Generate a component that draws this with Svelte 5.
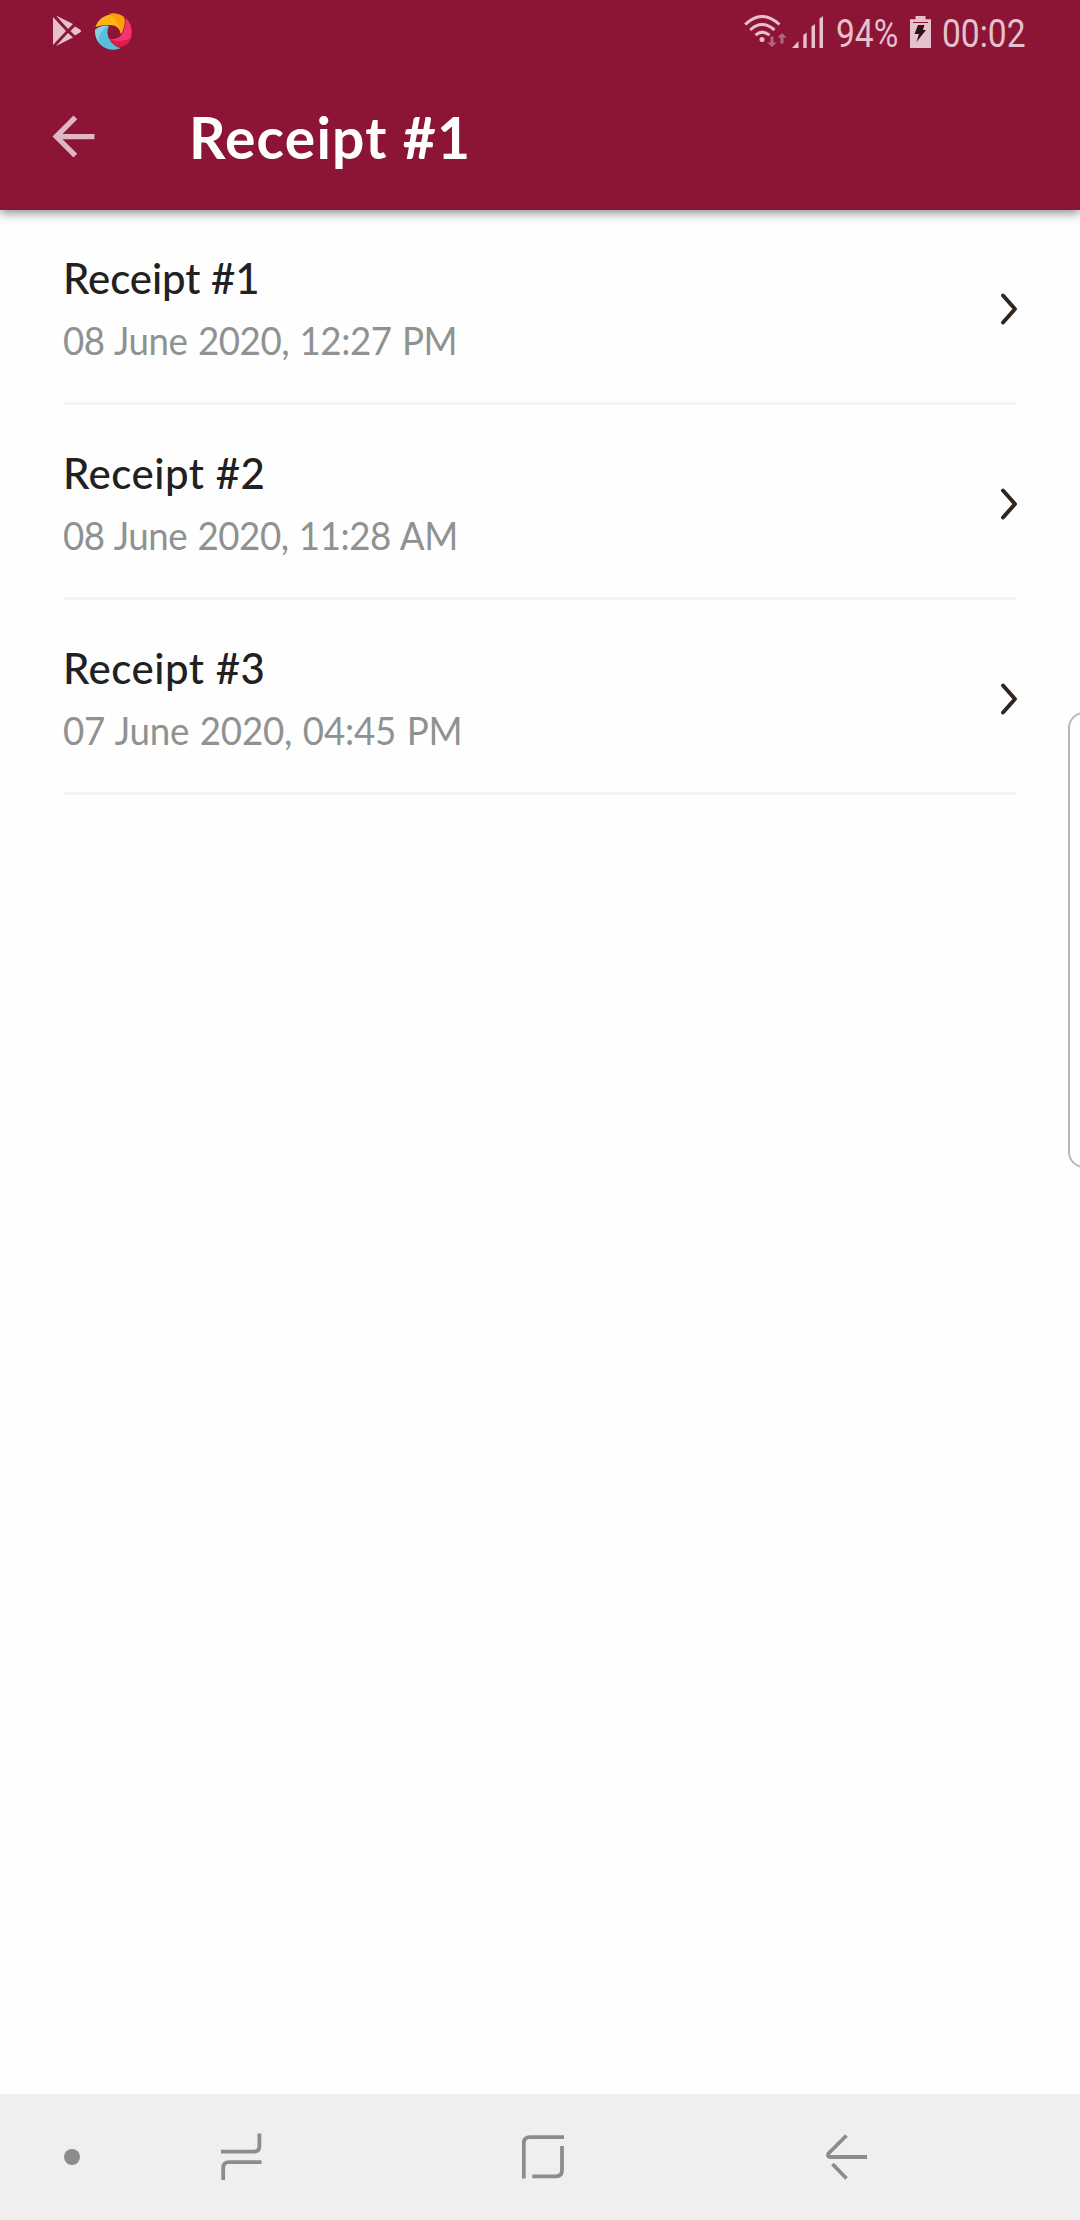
<script>
  const receipts = [
    { name: 'Receipt #1', date: '08 June 2020, 12:27 PM' },
    { name: 'Receipt #2', date: '08 June 2020, 11:28 AM' },
    { name: 'Receipt #3', date: '07 June 2020, 04:45 PM' }
  ];
</script>

<div class="screen">
  <header>
    <div class="status">
      <svg class="play" width="30" height="32" viewBox="0 0 30 32">
        <path d="M0 2L13 16L0 30ZM3 .5L20 9L15 14ZM3 31L15 18L20 22.5ZM17.500 16L22 11.500L27 14.500Q29 16 27 17.500L22 20.500Z" />
      </svg>
      <svg class="swirl" width="38" height="38" viewBox="0 0 38 38">
        <path fill="#ffb511" d="M.5 14C4 3 16-2 29 4Q31 12 26 21Q24 11 13 12Q6 12 .5 14Z" />
        <path fill="#ff9d08" d="M14 .8Q22-1 29 4Q31 12 26 21Q25 8 14 .8Z" />
        <path fill="#f4346e" d="M30.500 5C38 11 39 24 32 31C26 36 18 33 14 26Q24 27 27 21Q31 14 30.500 5Z" />
        <path fill="#d91d51" d="M32 31C26 36 18 33 14 26Q25 31 36 25Q35 28 32 31Z" />
        <path fill="#59bfdb" d="M0 17Q6 12 14 13Q10 21 16 29Q20 34 26 35C13 41-1 31 0 17Z" />
        <path fill="#83d1e4" d="M0 17Q6 12 14 13Q2 19 4 30Q0 24 0 17Z" />
      </svg>
      <svg class="wifi" width="44" height="34" viewBox="0 0 44 34">
        <g fill="none" stroke="#e4c1cc" stroke-width="3">
          <path d="M1.200 9.500Q18-6.500 35.500 9.500" />
          <path d="M6.200 15Q18 4 30.500 15" />
          <path d="M11.500 20.200Q18 14 25.500 20.200" />
        </g>
        <circle cx="18" cy="24.500" r="2.500" fill="#e4c1cc" />
        <path fill="#b46680" d="M26.500 21.500h3v6h3.200L28 32l-4.700-4.500h3.200ZM36.500 28.500v-6h-3.200L38 18l4.700 4.500h-3.200v6Z" />
      </svg>
      <svg class="signal" width="32" height="32" viewBox="0 0 32 32">
        <path d="M0 32L6.500 25v7ZM11.300 19l3.400-2.500V32h-3.400ZM19.500 10.500l3.500-2.500V32h-3.500ZM27.500 2.500L31 0v32h-3.500Z" />
      </svg>
      <span class="percent"><b>94%</b></span>
      <svg class="battery" width="21" height="32" viewBox="0 0 21 32">
        <path d="M5.500 0h10v3.200H21V32H0V3.200h5.500Z" />
        <path fill="#8c1535" d="M3 6h15v1H3z" />
        <path fill="#321018" d="M8 9h6.500l-1.600 5H16L6.500 26l2.400-8H4.500Z" />
      </svg>
      <span class="clock"><b>00:02</b></span>
    </div>
    <div class="appbar">
      <svg class="arrow" width="63" height="63" viewBox="0 0 24 24">
        <path d="M20 11H7.830l5.590-5.590L12 4l-8 8 8 8 1.410-1.410L7.830 13H20z" />
      </svg>
      <h1>Receipt #1</h1>
    </div>
  </header>

  <main>
    {#each receipts as receipt}
      <div class="row">
        <div class="text">
          <div class="name">{receipt.name}</div>
          <div class="date">{receipt.date}</div>
        </div>
        <svg class="chevron" width="18" height="34" viewBox="0 0 18 34">
          <path d="M3 3.500L15 17L3 30.500" />
        </svg>
      </div>
    {/each}
  </main>

  <div class="edge"></div>

  <nav>
    <svg width="16" height="16" viewBox="0 0 16 16"><circle cx="8" cy="8" r="8" fill="#8c8c8c" /></svg>
    <svg class="recents" width="41" height="48" viewBox="0 0 41 48">
      <path d="M0 18.600H33Q38.400 18.600 38.400 13V.5M2.200 47V35Q2.200 29.200 8 29.200H40.500" />
    </svg>
    <svg class="home" width="42" height="44" viewBox="0 0 42 44">
      <path d="M1.800 43.500V8Q1.800 2.200 8 2.200H42M40 11V35Q40 41.300 34 41.300H10.300" />
    </svg>
    <svg class="back" width="42" height="46" viewBox="0 0 42 46">
      <path d="M20.500 1.500L2.500 19.500Q1 23 4 23H41M6.500 30L20.500 44.500" />
    </svg>
  </nav>
</div>

<style>
  :global(body) {
    margin: 0;
    background: #fefefe;
  }
  .screen {
    position: relative;
    width: 1080px;
    height: 2220px;
    display: flex;
    flex-direction: column;
    overflow: hidden;
    background: #fefefe;
    font-family: Lato, 'Open Sans', sans-serif;
  }
  svg {
    display: block;
    flex: none;
  }
  header {
    height: 210px;
    background: #8c1535;
    box-shadow: 0 3px 10px rgba(0, 0, 0, 0.45);
  }
  .status {
    height: 63px;
    display: flex;
    align-items: flex-start;
    fill: #e4c1cc;
    color: #e4c1cc;
    font-family: Roboto, sans-serif;
    font-size: 39px;
    line-height: 46px;
  }
  .status b {
    display: inline-block;
    font-weight: 400;
    transform-origin: 0 0;
    transform: scaleX(0.86);
  }
  .play { margin: 15px 0 0 53px; }
  .swirl { margin: 13px 0 0 12px; }
  .wifi { margin: 15px 0 0 611px; }
  .signal { margin: 16px 0 0 4px; }
  .percent {
    width: 74px;
    margin: 11px 0 0 12px;
  }
  .battery { margin: 16px 0 0 0; }
  .clock {
    width: 90px;
    margin: 11px 0 0 11px;
  }
  .appbar {
    height: 147px;
    display: flex;
    align-items: flex-start;
  }
  .arrow {
    margin: 42px 0 0 42px;
    fill: #dfb7c4;
  }
  h1 {
    margin: 39px 0 0 84px;
    color: #fff;
    font-size: 57px;
    line-height: 70px;
    font-weight: 700;
    letter-spacing: 1.2px;
    white-space: nowrap;
  }
  main {
    flex: 1;
    padding: 0 63px;
  }
  .row {
    box-sizing: border-box;
    height: 195px;
    display: flex;
    justify-content: space-between;
    border-bottom: 3px solid #f4f4f4;
    white-space: nowrap;
  }
  .text { padding-top: 38px; }
  .name {
    color: #212121;
    font-size: 42px;
    line-height: 60px;
    font-weight: 500;
    letter-spacing: 0.5px;
  }
  .row:first-child .name { letter-spacing: -0.1px; }
  .date {
    margin-top: 2px;
    color: #8e9291;
    font-size: 39px;
    line-height: 60px;
    font-weight: 400;
    letter-spacing: -0.5px;
    word-spacing: 1.5px;
    transform-origin: 0 0;
    transform: scaleX(0.94);
  }
  .row:first-child .date { letter-spacing: -0.45px; }
  .row:last-child .date { letter-spacing: -0.2px; }
  .chevron {
    margin: 82px -1px 0 0;
    fill: none;
    stroke: #30261f;
    stroke-width: 4;
    stroke-linecap: round;
    stroke-linejoin: round;
  }
  .edge {
    position: absolute;
    box-sizing: border-box;
    top: 712px;
    right: -20px;
    width: 32px;
    height: 456px;
    border: 2px solid #b8b8b8;
    border-radius: 16px;
    background: #fff;
  }
  nav {
    height: 126px;
    display: flex;
    align-items: center;
    box-sizing: border-box;
    padding-left: 64px;
    background: #efefef;
    fill: none;
    stroke-width: 3.800;
  }
  nav path { stroke: #8c8c8c; }
  .recents { margin-left: 141px; }
  .home { margin-left: 260px; }
  .back { margin-left: 262px; }
</style>
